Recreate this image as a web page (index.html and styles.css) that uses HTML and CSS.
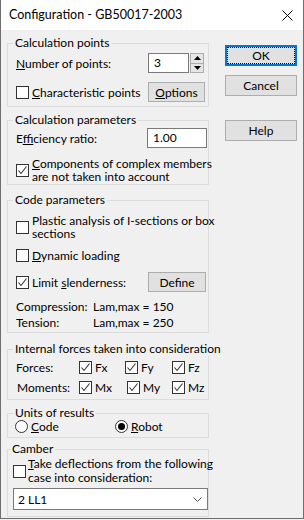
FILE: index.html
```html
<!DOCTYPE html>
<html>
<head>
<meta charset="utf-8">
<link rel="stylesheet" href="styles.css">
</head>
<body>
<div class="window">
  <div class="titlebar">
    <span class="title">Configuration - GB50017-2003</span>
    <svg class="close" width="11" height="11" viewBox="0 0 11 11"><path d="M0.5 0.5 L10.5 10.5 M10.5 0.5 L0.5 10.5" stroke="#000" stroke-width="1" fill="none"/></svg>
  </div>
  <div class="main">
    <div class="groups">
      <fieldset class="g g1">
        <legend>Calculation points</legend>
        <div class="row h20">
          <span class="lbl"><u>N</u>umber of points:</span>
          <div class="spin">
            <div class="spin-input">3</div>
            <div class="spin-btns">
              <span class="sb"><svg width="7" height="4" viewBox="0 0 7 4"><path d="M0 4 L3.5 0 L7 4 Z" fill="#000"/></svg></span>
              <span class="sb"><svg width="7" height="4" viewBox="0 0 7 4"><path d="M0 0 L3.5 4 L7 0 Z" fill="#000"/></svg></span>
            </div>
          </div>
        </div>
        <div class="row h20 mt9">
          <span class="lbl chk"><span class="cb"></span><span class="ct"><u>C</u>haracteristic points</span></span>
          <span class="btn w57"><u>O</u>ptions</span>
        </div>
      </fieldset>

      <fieldset class="g g2">
        <legend>Calculation parameters</legend>
        <div class="row h20">
          <span class="lbl">E<u>f</u>ficiency ratio:</span>
          <div class="input w60">1.00</div>
        </div>
        <div class="row mt9">
          <span class="chk"><span class="cb checked"><svg width="11" height="11" viewBox="0 0 11 11"><path d="M1.5 5.5 L4 8.5 L9.5 1.5" stroke="#333" stroke-width="1.1" fill="none"/></svg></span><span class="ct two"><u>C</u>omponents of complex members<br>are not taken into account</span></span>
        </div>
      </fieldset>

      <fieldset class="g g3">
        <legend>Code parameters</legend>
        <div class="row">
          <span class="chk"><span class="cb"></span><span class="ct two">Plastic analysis of I-sections or box<br>sections</span></span>
        </div>
        <div class="row h20 mt5">
          <span class="chk"><span class="cb"></span><span class="ct"><u>D</u>ynamic loading</span></span>
        </div>
        <div class="row h20 mt7">
          <span class="lbl chk"><span class="cb checked"><svg width="11" height="11" viewBox="0 0 11 11"><path d="M1.5 5.5 L4 8.5 L9.5 1.5" stroke="#333" stroke-width="1.1" fill="none"/></svg></span><span class="ct">Limit <u>s</u>lenderness:</span></span>
          <span class="btn w58">Define</span>
        </div>
        <div class="lam mt7"><span class="lk">Compression:</span><span>Lam,max = 150</span></div>
        <div class="lam"><span class="lk">Tension:</span><span>Lam,max = 250</span></div>
      </fieldset>

      <fieldset class="g g4">
        <legend>Internal forces taken into consideration</legend>
        <div class="frow">
          <span class="fk">Forces:</span>
          <span class="chk"><span class="cb checked"><svg width="11" height="11" viewBox="0 0 11 11"><path d="M1.5 5.5 L4 8.5 L9.5 1.5" stroke="#333" stroke-width="1.1" fill="none"/></svg></span><span class="ct">Fx</span></span>
          <span class="chk"><span class="cb checked"><svg width="11" height="11" viewBox="0 0 11 11"><path d="M1.5 5.5 L4 8.5 L9.5 1.5" stroke="#333" stroke-width="1.1" fill="none"/></svg></span><span class="ct">Fy</span></span>
          <span class="chk"><span class="cb checked"><svg width="11" height="11" viewBox="0 0 11 11"><path d="M1.5 5.5 L4 8.5 L9.5 1.5" stroke="#333" stroke-width="1.1" fill="none"/></svg></span><span class="ct">Fz</span></span>
        </div>
        <div class="frow">
          <span class="fk mk">Moments:</span>
          <span class="chk"><span class="cb checked"><svg width="11" height="11" viewBox="0 0 11 11"><path d="M1.5 5.5 L4 8.5 L9.5 1.5" stroke="#333" stroke-width="1.1" fill="none"/></svg></span><span class="ct">Mx</span></span>
          <span class="chk shift2"><span class="cb checked"><svg width="11" height="11" viewBox="0 0 11 11"><path d="M1.5 5.5 L4 8.5 L9.5 1.5" stroke="#333" stroke-width="1.1" fill="none"/></svg></span><span class="ct">My</span></span>
          <span class="chk"><span class="cb checked"><svg width="11" height="11" viewBox="0 0 11 11"><path d="M1.5 5.5 L4 8.5 L9.5 1.5" stroke="#333" stroke-width="1.1" fill="none"/></svg></span><span class="ct">Mz</span></span>
        </div>
      </fieldset>

      <fieldset class="g g5">
        <legend>Units of results</legend>
        <div class="rrow">
          <span class="chk rcode"><span class="rb"></span><span class="ct"><u>C</u>ode</span></span>
          <span class="chk"><span class="rb on"></span><span class="ct"><u>R</u>obot</span></span>
        </div>
      </fieldset>

      <fieldset class="g g6">
        <legend>Camber</legend>
        <div class="row">
          <span class="chk cam"><span class="cb"></span><span class="ct two14"><u>T</u>ake deflections from the following<br>case into consideration:</span></span>
        </div>
        <div class="select">
          <span>2 LL1</span>
          <svg width="9" height="5" viewBox="0 0 9 5"><path d="M0.5 0.5 L4.5 4.5 L8.5 0.5" stroke="#555" stroke-width="1" fill="none"/></svg>
        </div>
      </fieldset>
    </div>

    <div class="buttons">
      <span class="btn bw default"><span class="focus">OK</span></span>
      <span class="btn bw mt9">Cancel</span>
      <span class="btn bw help">Help</span>
    </div>
  </div>
</div>
</body>
</html>
```

FILE: styles.css
```css
* { box-sizing: border-box; }
html, body { margin: 0; padding: 0; background: #f0f0f0; }
body {
  font-family: Lato, "Noto Sans", sans-serif;
  font-size: 12px;
  color: #000;
  width: 304px;
  height: 520px;
  overflow: hidden;
}
u { text-decoration: underline; text-underline-offset: 1px; }

.window {
  width: 304px;
  height: 519px;
  border: 1px solid #6e6e6e;
  border-top: none;
  background: #f0f0f0;
}
.titlebar {
  height: 30px;
  background: #fff;
  display: flex;
  align-items: center;
  justify-content: space-between;
  padding: 0 10px 0 8px;
}
.title { font-size: 12.5px; line-height: 30px; }
.close { margin-top: 1px; }

.main {
  display: flex;
  padding: 6px 0 0 6px;
}
.groups { width: 202px; flex: none; }
.buttons {
  width: 72px;
  margin-left: 16px;
  padding-top: 9px;
  display: flex;
  flex-direction: column;
}

.g {
  margin: 0;
  min-width: 0;
  border: 1px solid #dcdcdc;
  padding: 0 0 0 8px;
}
.g legend {
  padding: 0 2px;
  margin-left: -3px;
  line-height: 14px;
  font-size: 12px;
  white-space: nowrap;
}
.g1 { padding-top: 3px; padding-bottom: 4px; }
.g2 { margin-top: 6px; padding-top: 1px; padding-bottom: 1px; }
.g3 { margin-top: 8px; padding-top: 7px; padding-bottom: 1px; }
.g4 { margin-top: 9px; padding-top: 1px; padding-bottom: 2px; }
.g5 { margin-top: 6px; padding-top: 0; padding-bottom: 4px; }
.g6 { margin-top: 4px; padding-top: 1px; padding-bottom: 6px; padding-left: 5px; }

.row { display: flex; align-items: center; }
.h20 { height: 20px; }
.mt5 { margin-top: 5px; }
.mt7 { margin-top: 7px; }
.mt9 { margin-top: 9px; }
.lbl { width: 132px; flex: none; white-space: nowrap; }

.chk { display: flex; align-items: center; }
.cb {
  width: 13px;
  height: 13px;
  border: 1px solid #333;
  background: #fff;
  flex: none;
  display: flex;
  align-items: center;
  justify-content: center;
}
.ct { margin-left: 3px; white-space: nowrap; }
.two { line-height: 13px; }
.two14 { line-height: 14px; }

.spin { display: flex; height: 20px; gap: 1px; }
.spin-input {
  width: 41px;
  height: 20px;
  border: 1px solid #7a7a7a;
  background: #fff;
  padding-left: 5px;
  line-height: 18px;
}
.spin-btns {
  width: 14px;
  display: flex;
  flex-direction: column;
  border: 1px solid #adadad;
  background: #e5e5e5;
}
.sb {
  flex: 1;
  display: flex;
  align-items: center;
  justify-content: center;
}
.sb + .sb { border-top: 1px solid #adadad; }

.input {
  height: 20px;
  border: 1px solid #7a7a7a;
  background: #fff;
  padding-left: 5px;
  line-height: 18px;
}
.w60 { width: 60px; margin-left: -1px; }

.btn {
  display: flex;
  align-items: center;
  justify-content: center;
  height: 20px;
  background: #e1e1e1;
  border: 1px solid #adadad;
}
.w57 { width: 57px; }
.w58 { width: 58px; }
.bw { width: 72px; height: 21px; }
.default {
  border: 1px solid #0078d7;
  box-shadow: inset 0 0 0 1px #0078d7;
  padding: 2px;
}
.focus {
  width: 100%;
  height: 100%;
  outline: 1px dotted #000;
  display: flex;
  align-items: center;
  justify-content: center;
}
.help { margin-top: 24px; }

.lam { display: flex; line-height: 16px; }
.lk { width: 77px; }

.frow {
  display: grid;
  grid-template-columns: 63px 46px 47px auto;
  height: 20px;
  align-items: center;
}
.mk { padding-left: 1px; }
.shift2 { margin-left: 2px; }

.rrow { display: flex; height: 13px; align-items: center; line-height: 13px; }
.rcode { width: 100px; margin-left: -1px; }
.rb {
  width: 13px;
  height: 13px;
  border: 1px solid #333;
  border-radius: 50%;
  background: #fff;
  flex: none;
  display: flex;
  align-items: center;
  justify-content: center;
}
.rb.on::after {
  content: "";
  width: 7px;
  height: 7px;
  border-radius: 50%;
  background: #000;
}

.cam .ct { margin-left: 2px; }
.select {
  margin-top: 3px;
  width: 195px;
  height: 22px;
  border: 1px solid #7a7a7a;
  background: #fff;
  display: flex;
  align-items: center;
  justify-content: space-between;
  padding: 0 5px 0 4px;
}
```
